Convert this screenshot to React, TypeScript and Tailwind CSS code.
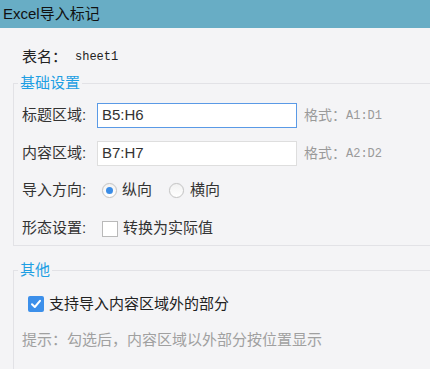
import React from "react";

const FONT = { fontFamily: '"Liberation Sans", "Noto Sans CJK SC", sans-serif' };
const MONO = { fontFamily: '"Liberation Mono", "Noto Sans CJK SC", monospace' };

// --- small form controls ---
const Radio = ({ checked }: { checked?: boolean }) => (
  <span className="w-[15px] h-[15px] rounded-full border border-[#c4c4c4] bg-gradient-to-b from-[#f2f2f2] to-white flex items-center justify-center shadow-[0_0_1px_rgba(0,0,0,0.1)]">
    {checked && <span className="w-[7px] h-[7px] rounded-full bg-[#3a8ce6]" />}
  </span>
);

const Check = ({ checked }: { checked?: boolean }) =>
  checked ? (
    <span className="w-[16px] h-[16px] rounded-[2px] bg-[#3c8fea] flex items-center justify-center">
      <svg width="12" height="12" viewBox="0 0 12 12" fill="none">
        <path d="M2 6.3 L4.8 9 L10 2.8" stroke="white" strokeWidth="2" strokeLinecap="round" strokeLinejoin="round" />
      </svg>
    </span>
  ) : (
    <span className="w-[16px] h-[16px] border border-[#b9b9b9] bg-white" />
  );

const Field = ({ label, value, hint, focus }: { label: string; value: string; hint: string; focus?: boolean }) => (
  <div className="flex items-center h-[25px]">
    <span className="w-[75px] text-[#333]">{label}</span>
    <div
      className={
        "w-[200px] h-[25px] bg-white flex items-center pl-[4px] text-[15px] text-[#333] border " +
        (focus ? "border-[#5a9ae6]" : "border-[#dedede]")
      }
    >
      {value}
    </div>
    <span className="ml-[7px] text-[#9a9a9a] text-[14px] flex items-center">
      格式：<span style={MONO} className="text-[12px]">{hint}</span>
    </span>
  </div>
);

export default function App() {
  return (
    <div style={FONT} className="w-[430px] h-[369px] overflow-hidden bg-[#f4f4f6] text-[15px]">
      {/* Title bar */}
      <div className="h-[28px] bg-[#68adc5] flex items-center pl-[3px] text-[#111]">Excel导入标记</div>

      <div className="pt-[19px]">
        <div className="pl-[22px] h-[20px] leading-[20px] flex items-center text-[#222]">
          表名：
          <span style={MONO} className="ml-[8px] text-[12px]">sheet1</span>
        </div>

        {/* 基础设置 */}
        <fieldset className="mt-[6px] ml-[13px] border border-r-0 border-[#e2e2e6] pl-[4px] pb-[4px]">
          <legend className="px-[2px] text-[#1e9fe3] leading-[20px]">基础设置</legend>
          <div className="pl-[4px] pt-[10px] flex flex-col">
            <Field label="标题区域:" value="B5:H6" hint="A1:D1" focus />
            <div className="mt-[13px]">
              <Field label="内容区域:" value="B7:H7" hint="A2:D2" />
            </div>
            <div className="mt-[12px] flex items-center h-[25px] text-[#333]">
              <span className="w-[80px]">导入方向:</span>
              <Radio checked />
              <span className="ml-[5px]">纵向</span>
              <span className="ml-[17px]" />
              <Radio />
              <span className="ml-[6px]">横向</span>
            </div>
            <div className="mt-[13px] flex items-center h-[25px] text-[#333]">
              <span className="w-[80px]">形态设置:</span>
              <Check />
              <span className="ml-[5px]">转换为实际值</span>
            </div>
          </div>
        </fieldset>

        {/* 其他 */}
        <fieldset className="mt-[14px] ml-[13px] border border-r-0 border-b-0 border-[#e2e2e6] pl-[4px] pb-[40px]">
          <legend className="px-[2px] text-[#1e9fe3] leading-[20px]">其他</legend>
          <div className="pl-[4px] pt-[14px] flex flex-col">
            <div className="ml-[6px] h-[20px] flex items-center text-[#222]">
              <Check checked />
              <span className="ml-[5px]">支持导入内容区域外的部分</span>
            </div>
            <div className="mt-[16px] h-[20px] leading-[20px] text-[#a0a0a0]">
              提示：勾选后，内容区域以外部分按位置显示
            </div>
          </div>
        </fieldset>
      </div>
    </div>
  );
}
